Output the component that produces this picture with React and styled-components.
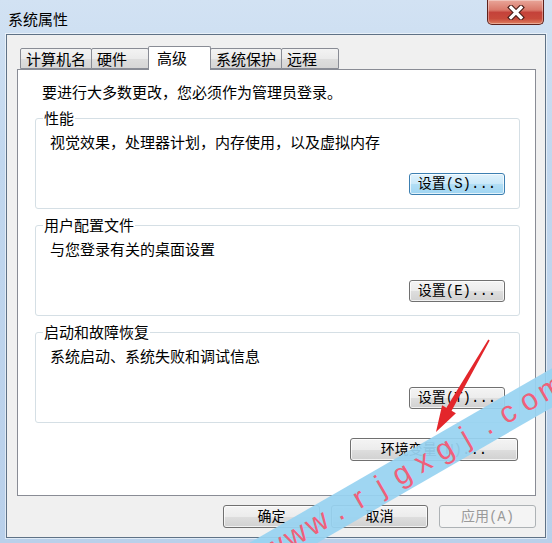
import styled, { createGlobalStyle } from "styled-components";

const GlobalStyle = createGlobalStyle`
  html, body {
    margin: 0;
    padding: 0;
  }
  body {
    width: 552px;
    height: 543px;
    overflow: hidden;
    background: #bcd3ec;
  }
`;

const Window = styled.div`
  position: relative;
  width: 552px;
  height: 543px;
  box-sizing: border-box;
  display: flex;
  flex-direction: column;
  padding: 0 6px 5px 6px;
  overflow: hidden;
  background: linear-gradient(180deg, #d2e2f3 0%, #c1d7ee 30%, #b9d0ea 100%);
  font-family: "Noto Sans CJK SC", "Microsoft YaHei", sans-serif;
  font-size: 15px;
  color: #000;
`;

const TitleBar = styled.div`
  height: 34px;
  display: flex;
  justify-content: space-between;
  align-items: flex-start;
`;

const Title = styled.div`
  padding: 10px 0 0 2px;
  line-height: 18px;
`;

const CloseButton = styled.div`
  width: 57px;
  height: 25px;
  margin-right: 2px;
  box-sizing: border-box;
  display: flex;
  align-items: center;
  justify-content: center;
  border: 1px solid #5e211b;
  border-top: none;
  border-radius: 0 0 5px 5px;
  background: linear-gradient(
    180deg,
    #e9a699 0%,
    #d9786a 42%,
    #c4423a 52%,
    #c84a3b 78%,
    #df8060 100%
  );
  box-shadow: inset 0 0 0 1px rgba(255, 255, 255, 0.35);
`;

const Client = styled.div`
  flex: 1;
  display: flex;
  flex-direction: column;
  box-sizing: border-box;
  padding: 13px 9px 9px 10px;
  background: #f0f0f0;
  border: 1px solid #5f7286;
  box-shadow: 0 0 0 1px rgba(255, 255, 255, 0.55);
`;

const TabStrip = styled.div`
  position: relative;
  z-index: 2;
  height: 21px;
  display: flex;
  align-items: flex-end;
  padding-left: 3px;
`;

const Tab = styled.div`
  position: relative;
  box-sizing: border-box;
  min-width: ${(p) => (p.$active ? "63px" : "58px")};
  height: ${(p) => (p.$active ? "24px" : "21px")};
  margin-left: -1px;
  margin-bottom: ${(p) => (p.$active ? "-1px" : "0")};
  padding: ${(p) => (p.$active ? "0 10px 2px 8px" : "0 5px")};
  display: flex;
  align-items: center;
  border: 1px solid #898c95;
  border-bottom: ${(p) => (p.$active ? "none" : "1px solid #898c95")};
  border-radius: 2px 2px 0 0;
  background: ${(p) =>
    p.$active
      ? "#ffffff"
      : "linear-gradient(180deg, #f3f3f3 0%, #ebebeb 50%, #dedede 51%, #d6d6d6 100%)"};
  z-index: ${(p) => (p.$active ? 1 : 0)};
  line-height: 18px;
  white-space: nowrap;

  &:first-child {
    margin-left: 0;
  }
`;

const Panel = styled.div`
  display: flex;
  flex-direction: column;
  box-sizing: border-box;
  background: #fff;
  border: 1px solid #898c95;
  padding: 12px 15px 34px 17px;
`;

const Intro = styled.div`
  margin-left: 7px;
  line-height: 20px;
`;

const GroupBox = styled.fieldset`
  margin: 7px 0 0 0;
  min-width: 0;
  padding: 5px 14px 13px 14px;
  border: 1px solid #d5dfe5;
  border-radius: 3px;
  box-shadow: inset 1px 1px 0 #fff;
`;

const Legend = styled.legend`
  margin-left: -7px;
  padding: 0 1px;
  line-height: 18px;
`;

const GroupText = styled.div`
  line-height: 20px;
`;

const ButtonRow = styled.div`
  display: flex;
  justify-content: flex-end;
  margin-top: ${(p) => p.$gap || 0}px;
  margin-right: ${(p) => p.$right || 0}px;
`;

const Button = styled.button`
  box-sizing: border-box;
  width: ${(p) => p.$w}px;
  height: ${(p) => p.$h || 22}px;
  padding: 0;
  border-radius: 3px;
  font-family: "Liberation Mono", "Noto Sans CJK SC", monospace;
  font-size: 14px;
  line-height: 18px;
  color: ${(p) => (p.disabled ? "#9a9a9a" : "#000")};
  border: 1px solid
    ${(p) => (p.$focus ? "#3c7fb1" : p.disabled ? "#adb2b5" : "#707070")};
  background: ${(p) =>
    p.$focus
      ? "linear-gradient(180deg, #e0f2fc 0%, #c9e8f9 50%, #b2def5 51%, #a0d5f2 100%)"
      : p.disabled
      ? "#f4f4f4"
      : "linear-gradient(180deg, #f4f4f4 0%, #ececec 50%, #dedede 51%, #d1d1d1 100%)"};
  box-shadow: inset 0 0 0 1px
    ${(p) => (p.disabled ? "transparent" : "rgba(255,255,255,0.7)")};
`;

const Footer = styled.div`
  display: flex;
  justify-content: flex-end;
  gap: 11px;
  margin-top: 9px;
`;

const Band = styled.div`
  position: absolute;
  left: 200px;
  top: 574px;
  width: 520px;
  height: 34px;
  box-sizing: border-box;
  padding: 0 0 3px 74px;
  display: flex;
  align-items: center;
  transform-origin: 0 50%;
  transform: rotate(-30deg);
  background: rgba(152, 211, 241, 0.93);
  z-index: 5;
`;

const Mark = styled.span`
  width: 24.5px;
  text-align: center;
  font-family: "Liberation Sans", Arial, sans-serif;
  font-size: 30px;
  line-height: 30px;
  color: #f0607a;
`;

const ArrowLayer = styled.svg`
  position: absolute;
  left: 0;
  top: 0;
  z-index: 6;
  pointer-events: none;
`;

const groups = [
  {
    title: "性能",
    text: "视觉效果，处理器计划，内存使用，以及虚拟内存",
    button: "设置(S)...",
    focus: true,
  },
  { title: "用户配置文件", text: "与您登录有关的桌面设置", button: "设置(E)..." },
  {
    title: "启动和故障恢复",
    text: "系统启动、系统失败和调试信息",
    button: "设置(T)...",
  },
];

const tabs = ["计算机名", "硬件", "高级", "系统保护", "远程"];

export default function App() {
  return (
    <>
      <GlobalStyle />
      <Window>
        <TitleBar>
          <Title>系统属性</Title>
          <CloseButton>
            <svg width="18" height="15" viewBox="0 0 18 15">
              <path
                d="M4 2.5 L14 12.5 M14 2.5 L4 12.5"
                stroke="#4a1d18"
                strokeWidth="5.4"
                strokeLinecap="square"
              />
              <path
                d="M4 2.5 L14 12.5 M14 2.5 L4 12.5"
                stroke="#ffffff"
                strokeWidth="3.2"
                strokeLinecap="square"
              />
            </svg>
          </CloseButton>
        </TitleBar>

        <Client>
          <TabStrip>
            {tabs.map((t) => (
              <Tab key={t} $active={t === "高级"}>
                {t}
              </Tab>
            ))}
          </TabStrip>

          <Panel>
            <Intro>要进行大多数更改，您必须作为管理员登录。</Intro>
            {groups.map((g) => (
              <GroupBox key={g.title}>
                <Legend>{g.title}</Legend>
                <GroupText>{g.text}</GroupText>
                <ButtonRow $gap={21}>
                  <Button $w={96} $focus={g.focus}>
                    {g.button}
                  </Button>
                </ButtonRow>
              </GroupBox>
            ))}
            <ButtonRow $gap={15} $right={2}>
              <Button $w={168} $h={23}>
                环境变量(N)...
              </Button>
            </ButtonRow>
          </Panel>

          <Footer>
            <Button $w={97} $h={23}>
              确定
            </Button>
            <Button $w={97} $h={23}>
              取消
            </Button>
            <Button $w={97} $h={23} disabled>
              应用(A)
            </Button>
          </Footer>
        </Client>

        <ArrowLayer width="552" height="543" viewBox="0 0 552 543">
          <polygon
            points="489.7,340.4 451.6,410.8 455.9,413.3 436,432 442.1,405.3 446.4,407.8 488.3,339.6"
            fill="#e3262b"
          />
        </ArrowLayer>

        <Band>
          {"www.rjgxgj.com".split("").map((c, i) => (
            <Mark key={i}>{c}</Mark>
          ))}
        </Band>
      </Window>
    </>
  );
}
